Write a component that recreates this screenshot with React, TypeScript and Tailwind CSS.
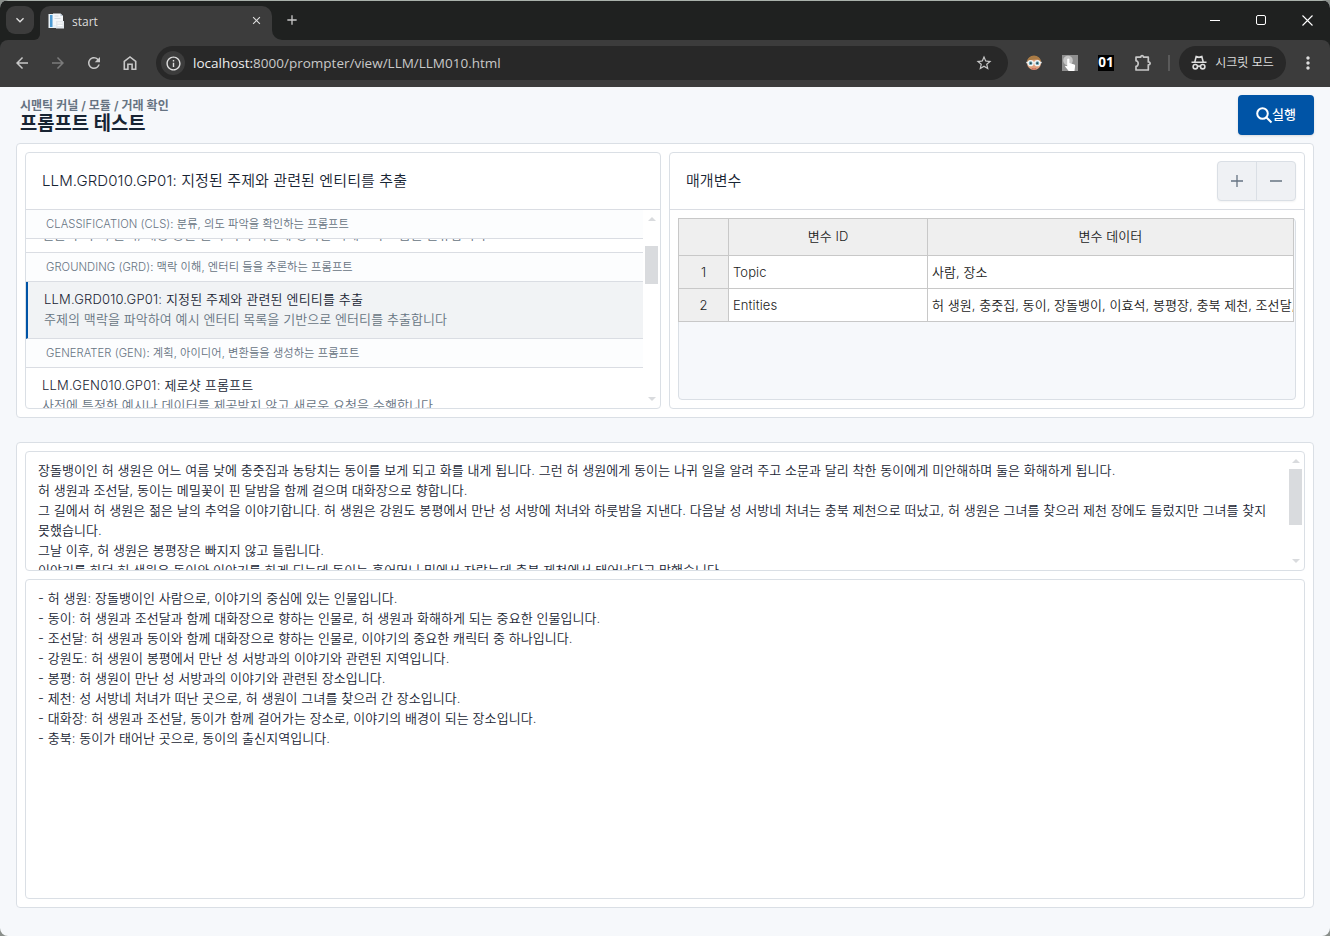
import type { ReactNode } from "react";
import { MdAdd, MdArrowBack, MdArrowForward, MdClose, MdInfoOutline, MdKeyboardArrowDown, MdMoreVert, MdRefresh, MdStarBorder } from "react-icons/md";

const PROMPT_LINES = [
  "장돌뱅이인 허 생원은 어느 여름 낮에 충줏집과 농탕치는 동이를 보게 되고 화를 내게 됩니다. 그런 허 생원에게 동이는 나귀 일을 알려 주고 소문과 달리 착한 동이에게 미안해하며 둘은 화해하게 됩니다.",
  "허 생원과 조선달, 동이는 메밀꽃이 핀 달밤을 함께 걸으며 대화장으로 향합니다.",
  "그 길에서 허 생원은 젊은 날의 추억을 이야기합니다. 허 생원은 강원도 봉평에서 만난 성 서방에 처녀와 하룻밤을 지낸다. 다음날 성 서방네 처녀는 충북 제천으로 떠났고, 허 생원은 그녀를 찾으러 제천 장에도 들렀지만 그녀를 찾지",
  "못했습니다.",
  "그날 이후, 허 생원은 봉평장은 빠지지 않고 들립니다.",
  "이야기를 하던 허 생원은 동이와 이야기를 하게 되는데 동이는 홀어머니 밑에서 자랐는데 충북 제천에서 태어났다고 말했습니다.",
];

const RESULT_LINES = [
  "- 허 생원: 장돌뱅이인 사람으로, 이야기의 중심에 있는 인물입니다.",
  "- 동이: 허 생원과 조선달과 함께 대화장으로 향하는 인물로, 허 생원과 화해하게 되는 중요한 인물입니다.",
  "- 조선달: 허 생원과 동이와 함께 대화장으로 향하는 인물로, 이야기의 중요한 캐릭터 중 하나입니다.",
  "- 강원도: 허 생원이 봉평에서 만난 성 서방과의 이야기와 관련된 지역입니다.",
  "- 봉평: 허 생원이 만난 성 서방과의 이야기와 관련된 장소입니다.",
  "- 제천: 성 서방네 처녀가 떠난 곳으로, 허 생원이 그녀를 찾으러 간 장소입니다.",
  "- 대화장: 허 생원과 조선달, 동이가 함께 걸어가는 장소로, 이야기의 배경이 되는 장소입니다.",
  "- 충북: 동이가 태어난 곳으로, 동이의 출신지역입니다.",
];

const ROWS = [
  { id: "Topic", data: "사람, 장소" },
  { id: "Entities", data: "허 생원, 충줏집, 동이, 장돌뱅이, 이효석, 봉평장, 충북 제천, 조선달, 성 서방네 처녀" },
];

function HomeIcon() {
  return (
    <svg width="16" height="16" viewBox="0 0 16 16" fill="none" stroke="currentColor" strokeWidth="1.6">
      <path d="M2.3 6.3 8 1.9l5.700 4.400V14.200H10.100V9.300H5.900v4.900H2.300z" />
    </svg>
  );
}

function PuzzleIcon() {
  return (
    <svg width="18" height="18" viewBox="0 0 18 18" fill="none" stroke="currentColor" strokeWidth="1.700" strokeLinejoin="round">
      <path d="M2 3.200h4.700c-.2-2.100 3-2.100 2.800 0h4.800v4.700c2.400-.1 2.400 3 0 2.900v5.200H2v-3.700c2.900.1 2.900-5.600 0-5.500z" />
    </svg>
  );
}

function IncognitoIcon() {
  return (
    <svg width="16" height="16" viewBox="0 0 16 16" fill="none" stroke="currentColor" strokeWidth="1.600">
      <path d="M.5 7.200h15M3.900 6.600l1.300-5.100 2.800.8 2.800-.8 1.300 5.100" />
      <circle cx="4.300" cy="11.700" r="2.200" />
      <circle cx="11.700" cy="11.700" r="2.200" />
      <path d="M6.500 11.500q1.500-1 3 0" />
    </svg>
  );
}

function DocumentIcon() {
  return (
    <svg width="16" height="16" viewBox="0 0 16 16">
      <path d="M.5 1h8v14h-8z" fill="#e8f1f8" />
      <path d="M2 2h2.500v12H2z" fill="#4d9bd3" />
      <path d="M5 .5h7.500L15 3v9H5z" fill="#f4f7fa" />
      <path d="M12.500.5V3H15z" fill="#b7c6d3" />
      <path d="M6.500 3h4M6.500 5.500h6M9 9.500h6" stroke="#d3dae0" />
      <path d="M8 8h8v7.500H8z" fill="#e3e8ed" />
      <path d="M9.500 10h5M9.500 12.500h5" stroke="#fff" />
    </svg>
  );
}

function GogglesIcon() {
  return (
    <svg width="16" height="16" viewBox="0 0 16 16">
      <circle cx="8" cy="8" r="7" fill="#dfa27e" />
      <path d="M1 7a7 6.500 0 0 1 14 0L12 4.500 4 5z" fill="#a97b45" />
      <path d="M5.500 12.800q2.500 1.200 5 0l-1 1.700h-3z" fill="#c9655a" />
      <path d="M.3 6.800h15.400v1.500H.3z" fill="#e9eef0" />
      <circle cx="4.600" cy="8.200" r="2.500" fill="#6fa9b8" stroke="#f4f6f6" strokeWidth="1.300" />
      <circle cx="11.400" cy="8.200" r="2.500" fill="#6fa9b8" stroke="#f4f6f6" strokeWidth="1.300" />
      <circle cx="4.800" cy="8.200" r=".9" fill="#27434c" />
      <circle cx="11.200" cy="8.200" r=".9" fill="#27434c" />
    </svg>
  );
}

function TouchIcon() {
  return (
    <svg width="16" height="16" viewBox="0 0 16 16">
      <path d="M0 0h16v16H0z" fill="#8f8f8f" />
      <circle cx="6" cy="5.500" r="4.800" fill="#c4c4c4" />
      <path d="M5.200 4q1.100-1.100 2.200 0v4l4.900 1.500q1 .4.800 1.500L12.500 16H6.700L3 11.500q.5-1.200 2.200-.2z" fill="#fff" />
    </svg>
  );
}

function Browser() {
  return (
    <div className="h-[87px] bg-[#1f2120] font-normal tracking-normal text-[#dedede]">
      <div className="flex h-10 items-start border-t border-[#a9b1ab] pt-[5px]">
        <button className="ml-1.5 flex h-7 w-7 items-center justify-center rounded-[9px] bg-[#3c3c3c]">
          <MdKeyboardArrowDown size={16} />
        </button>
        <div className="h-[34px] w-1.5 bg-[#3c3c3c]"><div className="h-full rounded-br-[8px] bg-[#1f2120]" /></div>
        <div className="flex h-[34px] w-[232px] items-center rounded-t-[10px] bg-[#3c3c3c] pr-2 pb-[5px] pl-2">
          <DocumentIcon />
          <span className="ml-2 flex-1 pt-0.5 font-['Open_Sans',sans-serif] text-[12px]">start</span>
          <MdClose size={13} className="mr-[1px]" />
        </div>
        <div className="h-[34px] w-2.5 bg-[#3c3c3c]"><div className="h-full rounded-bl-[10px] bg-[#1f2120]" /></div>
        <MdAdd size={16} className="mt-1.5 ml-[2px] text-[#c7c7c7]" />
        <div className="ml-auto flex h-7 items-center text-white">
          <div className="flex w-[46px] justify-center"><div className="h-px w-[10px] bg-white" /></div>
          <div className="flex w-[46px] justify-center"><div className="h-[10px] w-[10px] rounded-[2px] border border-white" /></div>
          <div className="flex w-[46px] justify-center">
            <svg width="11" height="11" viewBox="0 0 11 11" stroke="currentColor" strokeWidth="1.100"><path d="m.5.5 10 10m0-10-10 10" /></svg>
          </div>
        </div>
      </div>
      <div className="flex h-[47px] items-center rounded-t-[8px] bg-[#3c3c3c] pr-[13px] pb-px pl-3">
        <div className="flex w-36 items-center text-[#c7c7c7]">
          <div className="w-9 pl-[1px]"><MdArrowBack size={18} /></div>
          <div className="w-9 pl-[1px] text-[#7b7b7b]"><MdArrowForward size={18} /></div>
          <div className="w-9 pl-[1px]"><MdRefresh size={18} /></div>
          <div className="w-9 pl-[2px]"><HomeIcon /></div>
        </div>
        <div className="flex h-[34px] w-[852px] items-center rounded-full bg-[#282828] pr-4 pl-[5px]">
          <div className="flex h-6 w-6 items-center justify-center rounded-full bg-[#3c3c3c]"><MdInfoOutline size={17} /></div>
          <span className="ml-2 flex-1 font-['Open_Sans',sans-serif] text-[13.5px] text-[#c9c9c9]"><span className="text-[#eeeeee]">localhost:</span>8000/prompter/view/LLM/LLM010.html</span>
          <MdStarBorder size={18} className="-mr-[1px] text-[#c7c7c7]" />
        </div>
        <div className="ml-[18px] flex w-[126px] items-center gap-5 text-[#c7c7c7]">
          <GogglesIcon />
          <TouchIcon />
          <div className="flex h-4 w-4 items-center justify-center bg-black pb-0.5 font-['Open_Sans',sans-serif] text-[13.5px] leading-4 font-bold text-white">01</div>
          <PuzzleIcon />
        </div>
        <div className="ml-4 h-4 w-0.5 bg-[#5a5a5a]" />
        <div className="ml-[9px] flex h-[34px] w-[107px] items-center justify-center gap-2 rounded-full bg-[#282828] pb-px text-[12px]">
          <IncognitoIcon />
          <span>시크릿 모드</span>
        </div>
        <MdMoreVert size={20} className="-mr-[1px] ml-auto" />
      </div>
    </div>
  );
}

function ScrollBar({ thumb }: { thumb: string }) {
  return (
    <div className="flex w-[17px] flex-none flex-col items-center">
      <div className="flex h-[17px] flex-none items-center"><div className="border-x-4 border-b-4 border-x-transparent border-b-[#d9dbde]" /></div>
      <div className="flex-1"><div className={`w-[13px] bg-[#d9dbde] ${thumb}`} /></div>
      <div className="flex h-[17px] flex-none items-center pb-0.5"><div className="border-x-4 border-t-4 border-x-transparent border-t-[#d9dbde]" /></div>
    </div>
  );
}

function GroupHeader({ children }: { children: ReactNode }) {
  return <div className="h-[29px] border-b border-[#dadde3] bg-[#fcfdfe] pl-5 text-[11.25px] leading-7 text-[#667382]">{children}</div>;
}

export default function App() {
  return (
    <div className="h-[936px] overflow-hidden bg-[#8a8f8b] font-['Inter','Noto_Sans_CJK_KR',sans-serif] font-[350] whitespace-nowrap">
      <div className="flex h-full flex-col overflow-hidden rounded-[8px] bg-[#f6f8fb] text-[13px] tracking-[0.05px] text-[#182433]">
        <Browser />
        <header className="flex h-14 items-start justify-between pt-2 pr-4 pl-5">
          <div className="pt-[3px]">
            <div className="text-[12px] leading-4 font-semibold tracking-normal text-[#667382]">시맨틱 커널 / 모듈 / 거래 확인</div>
            <h1 className="text-[18.75px] leading-5 font-semibold tracking-normal">프롬프트 테스트</h1>
          </div>
          <button className="flex h-10 w-[76px] items-center rounded-[4px] bg-[#0054a6] pl-[18px] font-medium tracking-normal text-white shadow-sm">
            <svg width="17" height="17" viewBox="0 0 17 17" fill="none" stroke="currentColor" strokeWidth="2"><circle cx="6.500" cy="6.500" r="5.300" /><path d="m10.500 10.500 5 5" /></svg>
            <span className="-ml-px">실행</span>
          </button>
        </header>

        <section className="mx-4 flex h-[275px] gap-2 rounded-[4px] border border-[#dadfe5] bg-white p-2">
          <div className="flex w-[636px] flex-col overflow-hidden rounded-[4px] border border-[#dadfe5]">
            <h2 className="h-[57px] flex-none border-b border-[#dadde3] pl-4 text-[15px] leading-[55px] tracking-[0.11px]">LLM.GRD010.GP01: 지정된 주제와 관련된 엔티티를 추출</h2>
            <div className="flex min-h-0 flex-1">
              <div className="flex-1 overflow-hidden">
                <GroupHeader>CLASSIFICATION (CLS): 분류, 의도 파악을 확인하는 프롬프트</GroupHeader>
                <div className="flex h-[14px] items-end overflow-hidden border-b border-[#dadde3] pb-2 pl-4 leading-5 text-[#667382]">질문의 의도, 문맥, 내용 등을 분석 하여 사전에 정의된 카테고리 그룹을 분류합니다</div>
                <GroupHeader>GROUNDING (GRD): 맥락 이해, 엔터티 들을 추론하는 프롬프트</GroupHeader>
                <div className="h-[57px] border-b border-l-2 border-b-[#dadde3] border-l-[#0054a6] bg-[#f1f3f5] pt-[7px] pl-4 leading-5">
                  <div className="tracking-[0.17px]">LLM.GRD010.GP01: 지정된 주제와 관련된 엔티티를 추출</div>
                  <div className="tracking-[0.08px] text-[#667382]">주제의 맥락을 파악하여 예시 엔터티 목록을 기반으로 엔터티를 추출합니다</div>
                </div>
                <GroupHeader>GENERATER (GEN): 계획, 아이디어, 변환들을 생성하는 프롬프트</GroupHeader>
                <div className="pt-[7px] pl-4 leading-5">
                  <div className="tracking-[0.2px]">LLM.GEN010.GP01: 제로샷 프롬프트</div>
                  <div className="tracking-[0.08px] text-[#667382]">사전에 특정한 예시나 데이터를 제공받지 않고 새로운 요청을 수행합니다</div>
                </div>
              </div>
              <ScrollBar thumb="mt-[19px] h-[38px]" />
            </div>
          </div>

          <div className="flex w-[636px] flex-col rounded-[4px] border border-[#dadfe5]">
            <div className="flex h-[57px] flex-none items-center justify-between border-b border-[#dadde3] pr-2 pl-4">
              <h2 className="text-[15px] leading-5">매개변수</h2>
              <div className="flex h-10 w-[79px] rounded-[4px] border border-[#dadfe5] bg-[#eff1f4] text-[#667382] shadow-xs">
                <button className="flex flex-1 items-center justify-center border-r border-[#dadfe5]">
                  <svg width="12" height="12" viewBox="0 0 12 12" stroke="currentColor" strokeWidth="1.300"><path d="M0 6h12M6 0v12" /></svg>
                </button>
                <button className="flex flex-1 items-center justify-center">
                  <svg width="12" height="12" viewBox="0 0 12 12" stroke="currentColor" strokeWidth="1.300"><path d="M0 6h12" /></svg>
                </button>
              </div>
            </div>
            <div className="m-2 flex-1 rounded-[4px] border border-[#dadfe5] bg-[#f6f8fb]">
              <div className="-mt-px -ml-px grid w-[616px] grid-cols-[50px_199px_366px] border-t border-l border-[#c8c8c8] bg-white text-[#222]">
                {["", "변수 ID", "변수 데이터"].map((h) => (
                  <div key={h} className="h-[37px] border-r border-b border-[#c8c8c8] bg-[#efefef] text-center leading-[35px]">{h}</div>
                ))}
                {ROWS.map((row, i) => (
                  <div key={row.id} className="col-span-3 grid h-[33px] grid-cols-subgrid leading-8">
                    <div className="border-r border-b border-[#c8c8c8] bg-[#efefef] text-center">{i + 1}</div>
                    <div className="border-r border-b border-[#c8c8c8] pl-1 tracking-[0.1px]">{row.id}</div>
                    <div className="min-w-0 overflow-hidden border-r border-b border-[#c8c8c8] pl-1">{row.data}</div>
                  </div>
                ))}
              </div>
            </div>
          </div>
        </section>

        <section className="mx-4 mt-6 flex h-[466px] flex-col gap-2 rounded-[4px] border border-[#dadfe5] bg-white p-2">
          <div className="flex h-[120px] overflow-hidden rounded-[4px] border border-[#dadfe5]">
            <div className="flex-1 pt-2 pl-3 leading-5 tracking-[0.065px]">{PROMPT_LINES.map((l) => <p key={l}>{l}</p>)}</div>
            <ScrollBar thumb="h-[56px]" />
          </div>
          <div className="h-[320px] rounded-[4px] border border-[#dadfe5] pt-2 pl-3 leading-5 tracking-[0.065px]">{RESULT_LINES.map((l) => <p key={l}>{l}</p>)}</div>
        </section>
      </div>
    </div>
  );
}
